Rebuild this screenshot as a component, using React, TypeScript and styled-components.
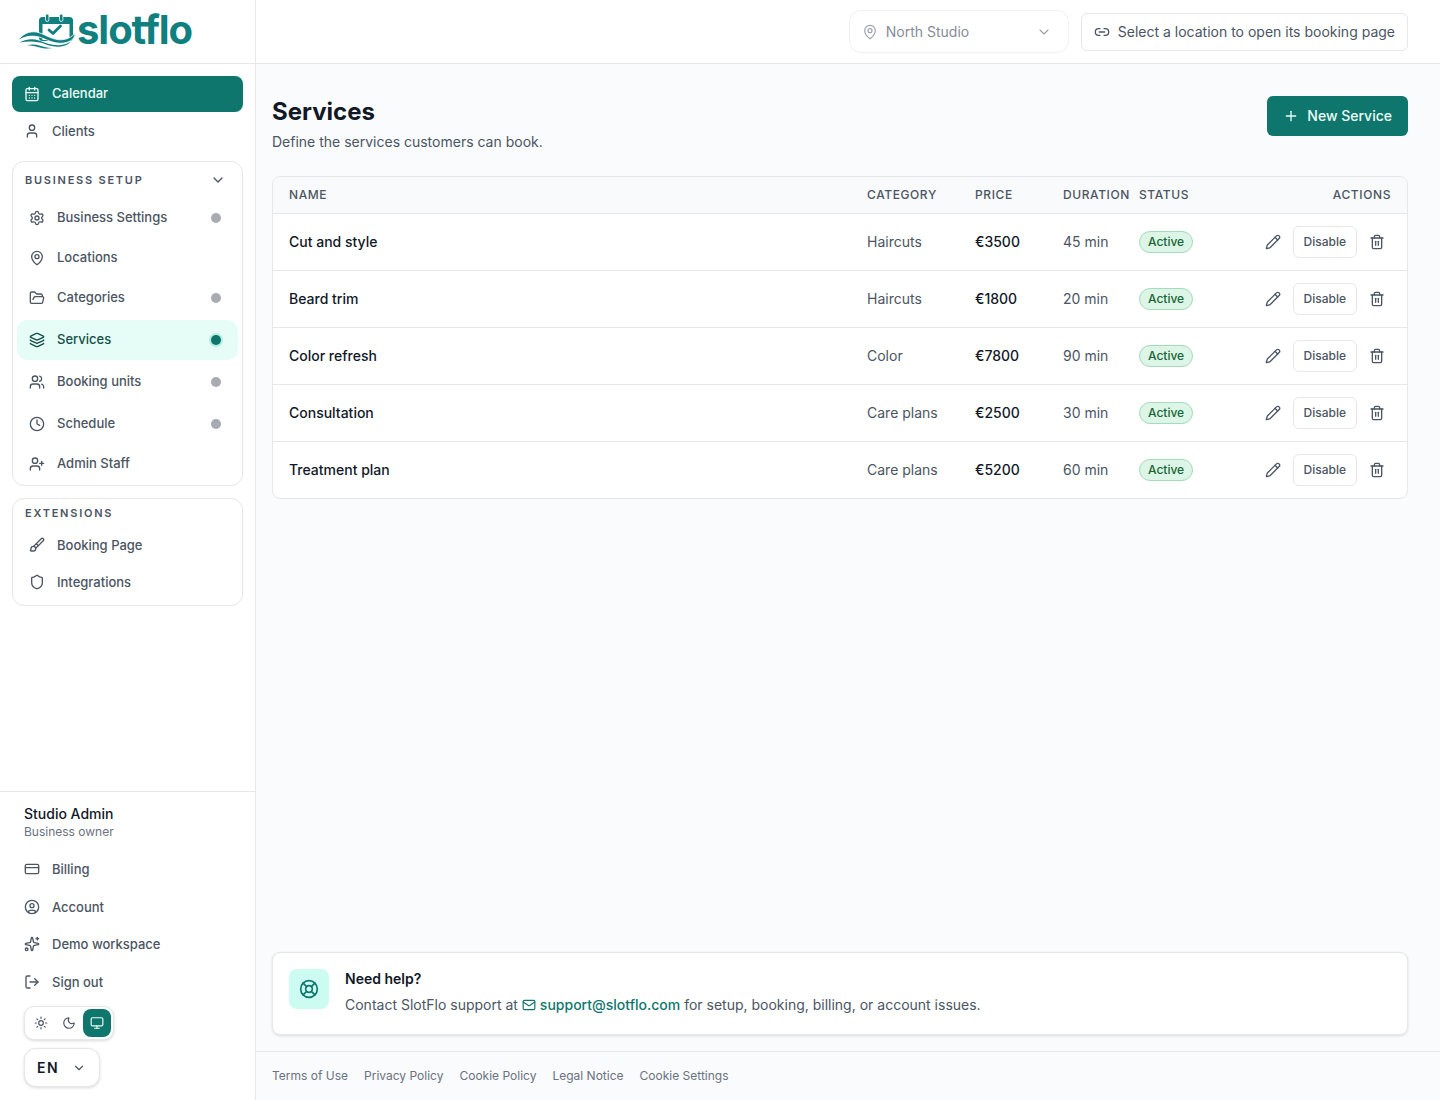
import React from 'react';
import styled, { createGlobalStyle } from 'styled-components';
import {
  Brush,
  CalendarDays,
  ChevronDown,
  CircleUser,
  Clock,
  CreditCard,
  FolderOpen,
  Layers,
  LifeBuoy,
  Link2,
  LogOut,
  Mail,
  MapPin,
  Monitor,
  Moon,
  Pencil,
  Plus,
  Settings,
  Shield,
  Sparkles,
  Sun,
  Trash2,
  User,
  UserPlus,
  Users,
} from 'lucide-react';

const colors = {
  primary: '#0f766e',
  logo: '#0f7f7f',
  ink: '#111827',
  text: '#4b5563',
  muted: '#6b7280',
  border: '#e5e7eb',
  page: '#f9fafb',
};

const services = [
  { name: 'Cut and style', category: 'Haircuts', price: '€3500', duration: '45 min' },
  { name: 'Beard trim', category: 'Haircuts', price: '€1800', duration: '20 min' },
  { name: 'Color refresh', category: 'Color', price: '€7800', duration: '90 min' },
  { name: 'Consultation', category: 'Care plans', price: '€2500', duration: '30 min' },
  { name: 'Treatment plan', category: 'Care plans', price: '€5200', duration: '60 min' },
];

const setupItems = [
  { label: 'Business Settings', icon: Settings, dot: true, offset: 0 },
  { label: 'Locations', icon: MapPin, dot: false, offset: 0 },
  { label: 'Categories', icon: FolderOpen, dot: true, offset: 0 },
  { label: 'Services', icon: Layers, dot: true, offset: 2, active: true },
  { label: 'Booking units', icon: Users, dot: true, offset: 2 },
  { label: 'Schedule', icon: Clock, dot: true, offset: 2 },
  { label: 'Admin Staff', icon: UserPlus, dot: false, offset: 0 },
];

const accountItems = [
  { label: 'Billing', icon: CreditCard },
  { label: 'Account', icon: CircleUser },
  { label: 'Demo workspace', icon: Sparkles },
  { label: 'Sign out', icon: LogOut },
];

const legalLinks = ['Terms of Use', 'Privacy Policy', 'Cookie Policy', 'Legal Notice', 'Cookie Settings'];

// drawn in page coordinates, hence the viewBox origin
const LogoMark: React.FC = () => (
  <svg width="58" height="37" viewBox="17 12 58 37" fill="none">
    <rect x="39" y="17" width="34" height="24" rx="3.5" fill={colors.logo} />
    <rect x="42.500" y="24" width="27" height="16" fill="#fff" />
    <rect x="45.500" y="14" width="3.400" height="7.500" rx="1.700" fill={colors.logo} stroke="#fff" strokeWidth="0.8" />
    <rect x="59.500" y="14" width="3.400" height="7.500" rx="1.700" fill={colors.logo} stroke="#fff" strokeWidth="0.8" />
    <path d="M49 30l4 3.500 7.500-7.500" stroke={colors.logo} strokeWidth="2.800" strokeLinecap="round" strokeLinejoin="round" />
    <path
      d="M17.500 40.500C24 32.500 32 30 40 33c8 3 16 9 26 6 3-1 6-2.500 9-5.500 0 5.500-5 8.500-11 9.500-10 1.500-18-4-25-6-8-2-14-.500-21.500 3.500z"
      fill={colors.logo}
      stroke="#fff"
      strokeWidth="0.8"
    />
    <path
      d="M19.500 42.500c7-3.500 13-4 19.500-2 7 2.500 14 5.500 22 4.500 3.500-.500 7-1.500 10-3.500-3 3.500-7 5-12 5.200-8 .300-13-2.700-19-4.200-7-1.500-13-1.500-20.500 0z"
      fill={colors.logo}
    />
    <path
      d="M27 45.200c5-1 9-.700 13 .600 4 1.300 8 2.400 13 2.200-5 .900-10 .500-14-.800-4-1.200-7-1.800-12-2z"
      fill={colors.logo}
    />
  </svg>
);

const App: React.FC = () => {
  return (
    <Shell>
      <GlobalStyle />
      <Sidebar>
        <LogoRow>
          <LogoMark />
          <LogoWord>slotflo</LogoWord>
        </LogoRow>
        <SideNav>
          <PrimaryLink $active>
            <CalendarDays size={16} strokeWidth={2} />
            <ActiveLabel>Calendar</ActiveLabel>
          </PrimaryLink>
          <PrimaryLink>
            <User size={16} strokeWidth={2} />
            Clients
          </PrimaryLink>
          <SetupGroup>
            <SetupHeader>
              <GroupLabel>Business Setup</GroupLabel>
              <ChevronDown size={16} strokeWidth={2} color={colors.text} />
            </SetupHeader>
            {setupItems.map(({ label, icon: Icon, dot, offset, active }) => (
              <SetupLink key={label} $active={active} $offset={offset}>
                <Icon size={16} strokeWidth={2} />
                <LinkLabel>{label}</LinkLabel>
                {dot && <StatusDot $active={active} />}
              </SetupLink>
            ))}
          </SetupGroup>
          <ExtensionsGroup>
            <ExtensionsLabel>Extensions</ExtensionsLabel>
            <ExtensionLink>
              <Brush size={16} strokeWidth={2} />
              Booking Page
            </ExtensionLink>
            <ExtensionLink>
              <Shield size={16} strokeWidth={2} />
              Integrations
            </ExtensionLink>
          </ExtensionsGroup>
        </SideNav>
        <SideFooter>
          <UserName>Studio Admin</UserName>
          <UserRole>Business owner</UserRole>
          <AccountList>
            {accountItems.map(({ label, icon: Icon }) => (
              <AccountLink key={label}>
                <Icon size={16} strokeWidth={2} />
                {label}
              </AccountLink>
            ))}
          </AccountList>
          <ThemeSwitch>
            <ThemeButton>
              <Sun size={14} strokeWidth={2} />
            </ThemeButton>
            <ThemeButton>
              <Moon size={14} strokeWidth={2} />
            </ThemeButton>
            <ThemeButton $active>
              <Monitor size={14} strokeWidth={2} />
            </ThemeButton>
          </ThemeSwitch>
          <LanguageButton>
            EN
            <ChevronDown size={14} strokeWidth={2} color={colors.text} />
          </LanguageButton>
        </SideFooter>
      </Sidebar>

      <MainColumn>
        <TopBar>
          <LocationSelect>
            <MapPin size={16} strokeWidth={1.75} />
            <LocationName>North Studio</LocationName>
            <ChevronDown size={16} strokeWidth={1.75} />
          </LocationSelect>
          <BookingLink>
            <Link2 size={16} strokeWidth={2} />
            Select a location to open its booking page
          </BookingLink>
        </TopBar>

        <Content>
          <PageHeader>
            <div>
              <PageTitle>Services</PageTitle>
              <PageSubtitle>Define the services customers can book.</PageSubtitle>
            </div>
            <NewButton>
              <Plus size={16} strokeWidth={2} />
              New Service
            </NewButton>
          </PageHeader>

          <TableCard>
            <HeadRow>
              <span>Name</span>
              <span>Category</span>
              <span>Price</span>
              <span>Duration</span>
              <span>Status</span>
              <span>Actions</span>
            </HeadRow>
            {services.map((service) => (
              <ServiceRow key={service.name}>
                <ServiceName>{service.name}</ServiceName>
                <MutedCell>{service.category}</MutedCell>
                <PriceCell>{service.price}</PriceCell>
                <MutedCell>{service.duration}</MutedCell>
                <span>
                  <ActiveBadge>Active</ActiveBadge>
                </span>
                <Actions>
                  <Pencil size={16} strokeWidth={2} />
                  <DisableButton>Disable</DisableButton>
                  <Trash2 size={16} strokeWidth={2} />
                </Actions>
              </ServiceRow>
            ))}
          </TableCard>

          <HelpCard>
            <HelpIcon>
              <LifeBuoy size={20} strokeWidth={2} />
            </HelpIcon>
            <div>
              <HelpTitle>Need help?</HelpTitle>
              <HelpText>
                Contact SlotFlo support at{' '}
                <SupportLink>
                  <Mail size={14} strokeWidth={2} />
                  support@slotflo.com
                </SupportLink>{' '}
                for setup, booking, billing, or account issues.
              </HelpText>
            </div>
          </HelpCard>
        </Content>

        <LegalBar>
          {legalLinks.map((link) => (
            <LegalLink key={link}>{link}</LegalLink>
          ))}
        </LegalBar>
      </MainColumn>
    </Shell>
  );
};

const GlobalStyle = createGlobalStyle`
  * {
    box-sizing: border-box;
  }

  body {
    margin: 0;
    background: ${colors.page};
    font-family: Inter, 'Liberation Sans', sans-serif;
    color: ${colors.ink};
  }
`;

const Shell = styled.div`
  display: flex;
  height: 1100px;
  overflow: hidden;
`;

const Sidebar = styled.aside`
  display: flex;
  flex-direction: column;
  flex: 0 0 256px;
  background: #fff;
  border-right: 1px solid ${colors.border};
`;

const LogoRow = styled.div`
  display: flex;
  align-items: center;
  gap: 2px;
  height: 64px;
  padding: 0 0 3px 17px;
  border-bottom: 1px solid ${colors.border};
`;

const LogoWord = styled.span`
  font-size: 40px;
  font-weight: 700;
  letter-spacing: -1.05px;
  line-height: 1;
  color: ${colors.logo};
`;

const SideNav = styled.nav`
  display: flex;
  flex-direction: column;
  flex: 1;
  padding: 12px 12px 0;
`;

const PrimaryLink = styled.div<{ $active?: boolean }>`
  display: flex;
  align-items: center;
  gap: 12px;
  height: ${(p) => (p.$active ? '36px' : '38px')};
  padding: 0 12px;
  border-radius: 8px;
  font-size: 13px;
  font-weight: 500;
  color: ${(p) => (p.$active ? '#ecfdf5' : colors.text)};
  background: ${(p) => (p.$active ? colors.primary : 'transparent')};
`;

const ActiveLabel = styled.span`
  margin-bottom: 2px;
`;

const SetupGroup = styled.section`
  height: 325px;
  margin-top: 11px;
  padding: 0 4px;
  border: 1px solid ${colors.border};
  border-radius: 12px;
`;

const SetupHeader = styled.div`
  display: flex;
  align-items: center;
  justify-content: space-between;
  height: 35.5px;
  padding: 0 12px 0 8px;
`;

const GroupLabel = styled.span`
  font-size: 11px;
  font-weight: 600;
  letter-spacing: 1.76px;
  text-transform: uppercase;
  color: ${colors.text};
`;

const SetupLink = styled.div<{ $active?: boolean; $offset?: number }>`
  display: flex;
  align-items: center;
  gap: 12px;
  height: 40px;
  margin-top: ${(p) => p.$offset ?? 0}px;
  padding: 0 12px;
  border-radius: 10px;
  font-size: 13px;
  font-weight: 500;
  color: ${(p) => (p.$active ? '#134e4a' : colors.text)};
  background: ${(p) => (p.$active ? '#e6fcf7' : 'transparent')};
`;

const LinkLabel = styled.span`
  flex: 1;
  margin-bottom: 1px;
`;

const StatusDot = styled.span<{ $active?: boolean }>`
  width: 10px;
  height: 10px;
  margin-right: 5px;
  border-radius: 50%;
  background: ${(p) => (p.$active ? colors.primary : '#a8abb2')};
  box-shadow: ${(p) => (p.$active ? '0 0 0 2px #b5ede0' : 'none')};
`;

const ExtensionsGroup = styled.section`
  height: 108px;
  margin-top: 12px;
  padding: 0 4px;
  border: 1px solid ${colors.border};
  border-radius: 12px;
`;

const ExtensionsLabel = styled(GroupLabel)`
  display: block;
  padding: 8px 8px 0;
  line-height: 13px;
`;

const ExtensionLink = styled.div`
  display: flex;
  align-items: center;
  gap: 12px;
  height: 37px;
  padding: 0 12px;
  font-size: 13px;
  font-weight: 500;
  color: ${colors.text};

  &:first-of-type {
    margin-top: 6px;
  }
`;

const SideFooter = styled.div`
  padding: 13px 24px 13px;
  border-top: 1px solid ${colors.border};
`;

const UserName = styled.div`
  font-size: 14px;
  font-weight: 500;
  line-height: 17px;
  color: ${colors.ink};
`;

const UserRole = styled.div`
  margin-top: 2px;
  font-size: 12px;
  line-height: 16px;
  color: ${colors.muted};
`;

const AccountList = styled.div`
  margin-top: 10.4px;
`;

const AccountLink = styled.div`
  display: flex;
  align-items: center;
  gap: 12px;
  height: 37.5px;
  font-size: 13px;
  font-weight: 500;
  color: ${colors.text};
`;

const ThemeSwitch = styled.div`
  display: flex;
  align-items: center;
  justify-content: space-between;
  width: 90px;
  height: 34px;
  margin-top: 5.6px;
  padding: 2px;
  border: 1px solid ${colors.border};
  border-radius: 10px;
  background: #fff;
  box-shadow: 0 1px 3px rgba(0, 0, 0, 0.15);
`;

const ThemeButton = styled.span<{ $active?: boolean }>`
  display: flex;
  align-items: center;
  justify-content: center;
  width: 28px;
  height: 28px;
  border-radius: 8px;
  color: ${(p) => (p.$active ? '#ecfdf5' : colors.text)};
  background: ${(p) => (p.$active ? colors.primary : 'transparent')};
`;

const LanguageButton = styled.div`
  display: flex;
  align-items: center;
  justify-content: space-between;
  width: 76px;
  height: 39px;
  margin-top: 8px;
  padding: 0 13px 0 12px;
  border: 1px solid ${colors.border};
  border-radius: 12px;
  background: #fff;
  box-shadow: 0 1px 3px rgba(0, 0, 0, 0.15);
  font-size: 14px;
  font-weight: 600;
  letter-spacing: 1.5px;
  color: ${colors.ink};
`;

const MainColumn = styled.div`
  display: flex;
  flex-direction: column;
  flex: 1;
  min-width: 0;
`;

const TopBar = styled.header`
  display: flex;
  align-items: center;
  justify-content: flex-end;
  gap: 12px;
  height: 64px;
  padding: 0 32px 0 0;
  background: #fff;
  border-bottom: 1px solid ${colors.border};
`;

const LocationSelect = styled.div`
  display: flex;
  align-items: center;
  gap: 8px;
  width: 220px;
  height: 43px;
  padding: 0 16px 0 12px;
  border: 1px solid #f0f1f3;
  border-radius: 12px;
  color: #9ca3af;
  font-size: 14px;
`;

const LocationName = styled.span`
  flex: 1;
  color: #868c97;
`;

const BookingLink = styled.div`
  display: flex;
  align-items: center;
  gap: 8px;
  height: 38px;
  padding: 0 12px;
  border: 1px solid ${colors.border};
  border-radius: 6px;
  background: #fff;
  font-size: 14px;
  color: ${colors.text};
`;

const Content = styled.main`
  display: flex;
  flex-direction: column;
  flex: 1;
  padding: 32px 32px 16px 16px;
  background: #f9fbfc;
`;

const PageHeader = styled.div`
  display: flex;
  align-items: flex-start;
  justify-content: space-between;
  margin-bottom: 24px;
`;

const PageTitle = styled.h1`
  margin: 0;
  font-size: 24px;
  font-weight: 700;
  line-height: 32px;
  color: ${colors.ink};
`;

const PageSubtitle = styled.p`
  margin: 4px 0 0;
  font-size: 14px;
  line-height: 20px;
  color: ${colors.text};
`;

const NewButton = styled.div`
  display: flex;
  align-items: center;
  gap: 8px;
  height: 40px;
  padding: 0 16px 1px;
  border-radius: 6px;
  background: ${colors.primary};
  color: #ecfdf5;
  font-size: 14px;
  font-weight: 500;
`;

const TableCard = styled.section`
  border: 1px solid ${colors.border};
  border-radius: 8px;
  background: #fff;
  overflow: hidden;
`;

const tableColumns = '578px 108px 88px 76px 1fr auto';

const HeadRow = styled.div`
  display: grid;
  grid-template-columns: ${tableColumns};
  align-items: center;
  height: 37px;
  padding: 0 16px 1px;
  background: #f9fafb;
  border-bottom: 1px solid ${colors.border};
  font-size: 12px;
  font-weight: 500;
  letter-spacing: 0.6px;
  text-transform: uppercase;
  color: ${colors.text};
`;

const ServiceRow = styled.div`
  display: grid;
  grid-template-columns: ${tableColumns};
  align-items: center;
  height: 57px;
  padding: 0 16px 1px;
  border-bottom: 1px solid ${colors.border};
  font-size: 14px;

  &:last-child {
    height: 56px;
    padding-bottom: 1px;
    border-bottom: 0;
  }
`;

const ServiceName = styled.span`
  font-weight: 500;
  color: ${colors.ink};
`;

const MutedCell = styled.span`
  color: ${colors.text};
`;

const PriceCell = styled.span`
  font-weight: 500;
  color: ${colors.ink};
`;

const ActiveBadge = styled.span`
  display: inline-flex;
  align-items: center;
  height: 22px;
  padding: 0 8px;
  border: 1px solid #a3dcb9;
  border-radius: 999px;
  background: #dcf5e6;
  font-size: 12px;
  font-weight: 500;
  color: #166534;
`;

const Actions = styled.div`
  display: flex;
  align-items: center;
  gap: 12px;
  padding-right: 6px;
  color: ${colors.text};
`;

const DisableButton = styled.span`
  display: flex;
  align-items: center;
  height: 32px;
  padding: 0 10px;
  border: 1px solid ${colors.border};
  border-radius: 6px;
  font-size: 12px;
  font-weight: 500;
  color: ${colors.text};
`;

const HelpCard = styled.section`
  display: flex;
  align-items: flex-start;
  gap: 16px;
  height: 83px;
  margin-top: auto;
  padding: 16px;
  border: 1px solid ${colors.border};
  border-radius: 8px;
  background: #fff;
  box-shadow: 0 1px 3px rgba(0, 0, 0, 0.12);
`;

const HelpIcon = styled.div`
  display: flex;
  align-items: center;
  justify-content: center;
  width: 40px;
  height: 40px;
  border-radius: 8px;
  background: #ccfbf1;
  color: ${colors.primary};
`;

const HelpTitle = styled.div`
  font-size: 14px;
  font-weight: 600;
  line-height: 20px;
  color: ${colors.ink};
`;

const HelpText = styled.div`
  margin-top: 6px;
  font-size: 14px;
  line-height: 20px;
  color: ${colors.text};
`;

const SupportLink = styled.span`
  color: ${colors.primary};
  font-weight: 500;

  svg {
    margin-right: 4px;
    vertical-align: -2px;
  }
`;

const LegalBar = styled.footer`
  display: flex;
  align-items: center;
  gap: 16px;
  height: 49px;
  padding: 0 16px 2px;
  background: #f9fbfc;
  border-top: 1px solid ${colors.border};
`;

const LegalLink = styled.span`
  font-size: 12px;
  color: ${colors.muted};
`;

export default App;
